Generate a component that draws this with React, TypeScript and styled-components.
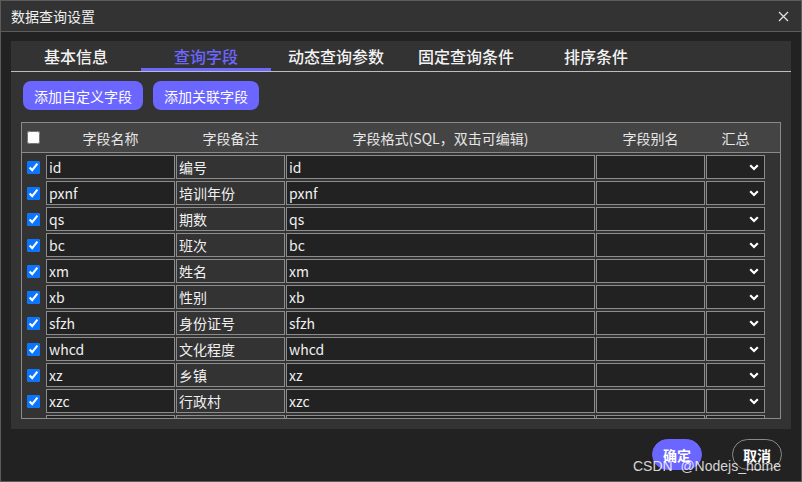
import React from 'react';
import styled, { createGlobalStyle } from 'styled-components';

const GlobalStyle = createGlobalStyle`
  html, body { margin: 0; padding: 0; background: #222; }
  * { box-sizing: border-box; }
  body { font-family: "Noto Sans CJK SC", "Noto Sans", sans-serif; }
`;

const Dialog = styled.div`
  position: relative;
  width: 802px;
  height: 482px;
  border: 1px solid #5c5c5c;
  background: #222;
  display: flex;
  flex-direction: column;
  color: #eee;
`;

const TitleBar = styled.div`
  height: 31px;
  border-bottom: 1px solid #5c5c5c;
  background: #333;
  display: flex;
  align-items: center;
  justify-content: space-between;
  padding: 0 12px 0 10px;
  font-size: 14px;
  color: #f0f0f0;
`;

const Close = styled.div`
  display: flex;
  align-items: center;
`;

const Body = styled.div`
  padding: 9px 10px 0 10px;
`;

const Panel = styled.div`
  height: 388px;
  background: #333;
  display: flex;
  flex-direction: column;
`;

const TabBar = styled.div`
  display: flex;
  height: 31px;
  border-bottom: 1px solid #bdbdbd;
`;

const Tab = styled.div<{ $active?: boolean }>`
  width: 130px;
  height: 30px;
  display: flex;
  align-items: center;
  justify-content: center;
  font-size: 16px;
  font-weight: 500;
  color: ${p => (p.$active ? '#6b66ff' : '#f2f2f2')};
  border-bottom: 3px solid ${p => (p.$active ? '#6b66ff' : 'transparent')};
  padding-top: 3px;
`;

const Toolbar = styled.div`
  display: flex;
  gap: 10px;
  padding: 9px 12px 0;
`;

const PrimaryButton = styled.button`
  height: 29px;
  padding: 0 11px;
  border: none;
  border-radius: 8px;
  background: #6b66ff;
  color: #fff;
  font-family: inherit;
  font-size: 14px;
`;

const Table = styled.div`
  margin: 12px 10px 0;
  border: 1px solid #8a8a8a;
`;

const Grid = styled.div`
  display: grid;
  grid-template-columns: 23px 129px 109px 309px 109px 59px;
  column-gap: 1px;
  align-items: center;
`;

const HeaderRow = styled(Grid)`
  height: 30px;
  background: #444;
  border-bottom: 1px solid #8a8a8a;
  font-size: 14px;
  color: #e6e6e6;
`;

const HeadCell = styled.div`
  text-align: center;
`;

const Scroller = styled.div`
  height: 265px;
  overflow-y: scroll;
  &::-webkit-scrollbar { width: 8px; }
  &::-webkit-scrollbar-track { background: #3b3b3b; }
  &::-webkit-scrollbar-thumb { background: #4f4f4f; }
`;

const Rows = styled(Grid)`
  row-gap: 2px;
  padding: 2px 0;
`;

const Check = styled.input`
  margin: 0 0 0 5px;
  width: 13px;
  height: 13px;
  justify-self: start;
  accent-color: #0a75ff;
`;

const Field = styled.input<{ $muted?: boolean }>`
  height: 24px;
  width: 100%;
  border: 1px solid #8c8c8c;
  background: ${p => (p.$muted ? '#333' : '#222')};
  color: #f0f0f0;
  font-family: inherit;
  font-size: 14px;
  padding: 0 2px;
  outline: none;
`;

const SelectBox = styled.div`
  height: 24px;
  border: 1px solid #8c8c8c;
  background: #222;
  display: flex;
  align-items: center;
  justify-content: flex-end;
  padding-right: 5px;
`;

const Footer = styled.div`
  display: flex;
  justify-content: flex-end;
  gap: 30px;
  padding: 10px 19px 0;
`;

const RoundButton = styled.button<{ $primary?: boolean }>`
  width: 50px;
  height: 31px;
  border-radius: 16px;
  border: 1px solid ${p => (p.$primary ? '#6b66ff' : '#8a8a8a')};
  background: ${p => (p.$primary ? '#6b66ff' : 'transparent')};
  color: #fff;
  font-family: inherit;
  font-size: 14px;
  font-weight: 700;
  padding: 0;
`;

const Watermark = styled.div`
  position: absolute;
  right: 20px;
  bottom: 7px;
  font-family: "Liberation Sans", Arial, sans-serif;
  font-size: 14px;
  color: rgba(255, 255, 255, 0.82);
  pointer-events: none;
  white-space: pre;
`;

const tabs = ['基本信息', '查询字段', '动态查询参数', '固定查询条件', '排序条件'];

const fields: [string, string][] = [
  ['id', '编号'],
  ['pxnf', '培训年份'],
  ['qs', '期数'],
  ['bc', '班次'],
  ['xm', '姓名'],
  ['xb', '性别'],
  ['sfzh', '身份证号'],
  ['whcd', '文化程度'],
  ['xz', '乡镇'],
  ['xzc', '行政村'],
  ['lxdh', '联系电话'],
  ['gz', '工种'],
  ['bz', '备注'],
];

const Chevron = () => (
  <svg width="10" height="7" viewBox="0 0 10 7">
    <polyline points="1.2,1.2 5,5 8.8,1.2" fill="none" stroke="#fff" strokeWidth="2.2" />
  </svg>
);

export default function App() {
  return (
    <>
      <GlobalStyle />
      <Dialog>
        <TitleBar>
          <span>数据查询设置</span>
          <Close>
            <svg width="11" height="11" viewBox="0 0 11 11">
              <path d="M1 1L10 10M10 1L1 10" stroke="#e0e0e0" strokeWidth="1.3" />
            </svg>
          </Close>
        </TitleBar>
        <Body>
          <Panel>
            <TabBar>
              {tabs.map((t, i) => (
                <Tab key={t} $active={i === 1}>{t}</Tab>
              ))}
            </TabBar>
            <Toolbar>
              <PrimaryButton>添加自定义字段</PrimaryButton>
              <PrimaryButton>添加关联字段</PrimaryButton>
            </Toolbar>
            <Table>
              <HeaderRow>
                <Check type="checkbox" />
                <HeadCell>字段名称</HeadCell>
                <HeadCell>字段备注</HeadCell>
                <HeadCell>字段格式(SQL，双击可编辑)</HeadCell>
                <HeadCell>字段别名</HeadCell>
                <HeadCell>汇总</HeadCell>
              </HeaderRow>
              <Scroller>
                <Rows>
                  {fields.map(([name, remark]) => (
                    <React.Fragment key={name}>
                      <Check type="checkbox" defaultChecked />
                      <Field defaultValue={name} />
                      <Field $muted defaultValue={remark} />
                      <Field defaultValue={name} />
                      <Field defaultValue="" />
                      <SelectBox>
                        <Chevron />
                      </SelectBox>
                    </React.Fragment>
                  ))}
                </Rows>
              </Scroller>
            </Table>
          </Panel>
        </Body>
        <Footer>
          <RoundButton $primary>确定</RoundButton>
          <RoundButton>取消</RoundButton>
        </Footer>
        <Watermark>CSDN  @Nodejs_home</Watermark>
      </Dialog>
    </>
  );
}
